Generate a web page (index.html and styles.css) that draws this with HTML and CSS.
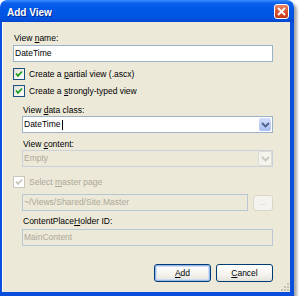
FILE: index.html
```html
<!DOCTYPE html>
<html lang="en">
<head>
    <meta charset="UTF-8">
    <title>Add View</title>
    <link rel="stylesheet" href="styles.css">
</head>
<body>

    <!-- Ventana del dialogo -->
    <div class="window">
        <div class="titlebar">
            <span class="title">Add View</span>
            <span class="close-btn">
                <svg width="9" height="9" viewBox="0 0 9 9">
                    <path d="M1 1 L8 8 M8 1 L1 8" stroke="#fff" stroke-width="2" fill="none"/>
                </svg>
            </span>
        </div>

        <div class="frame">
            <div class="body">
                <div class="label">View <u>n</u>ame:</div>
                <div class="textbox tb-name">DateTime</div>

                <div class="check check-1">
                    <span class="box">
                        <svg width="10" height="10" viewBox="0 0 10 10"><path d="M2 4.5 L4 6.8 L8 2.5" stroke="#21a121" stroke-width="1.8" fill="none"/></svg>
                    </span>
                    <span>Create a <u>p</u>artial view (.ascx)</span>
                </div>
                <div class="check check-2">
                    <span class="box">
                        <svg width="10" height="10" viewBox="0 0 10 10"><path d="M2 4.5 L4 6.8 L8 2.5" stroke="#21a121" stroke-width="1.8" fill="none"/></svg>
                    </span>
                    <span>Create a <u>s</u>trongly-typed view</span>
                </div>

                <div class="group">
                    <div class="label lbl-class">View <u>d</u>ata class:</div>
                    <div class="combo">
                        <span class="combo-text">DateTime<span class="caret"></span></span>
                        <span class="drop-btn">
                            <svg width="9" height="6" viewBox="0 0 9 6"><path d="M1 1 L4.5 4.5 L8 1" stroke="#4d6185" stroke-width="1.8" fill="none"/></svg>
                        </span>
                    </div>

                    <div class="label lbl-content">View <u>c</u>ontent:</div>
                    <div class="combo disabled">
                        <span class="combo-text">Empty</span>
                        <span class="drop-btn">
                            <svg width="9" height="6" viewBox="0 0 9 6"><path d="M1 1 L4.5 4.5 L8 1" stroke="#c9c7ba" stroke-width="1.8" fill="none"/></svg>
                        </span>
                    </div>
                </div>

                <div class="check check-3 disabled">
                    <span class="box">
                        <svg width="10" height="10" viewBox="0 0 10 10"><path d="M2 4.5 L4 6.8 L8 2.5" stroke="#c9c7ba" stroke-width="1.8" fill="none"/></svg>
                    </span>
                    <span>Select <u>m</u>aster page</span>
                </div>

                <div class="group">
                    <div class="master-row">
                        <div class="textbox disabled tb-master">~/Views/Shared/Site.Master</div>
                        <span class="browse-btn">...</span>
                    </div>
                    <div class="label lbl-cph">ContentPlace<u>H</u>older ID:</div>
                    <div class="textbox disabled tb-cph">MainContent</div>
                </div>

                <div class="actions">
                    <button class="btn btn-default"><u>A</u>dd</button>
                    <button class="btn"><u>C</u>ancel</button>
                </div>

                <!-- Agarre para redimensionar -->
                <svg class="grip" width="9" height="9" viewBox="0 0 9 9">
                    <g fill="#c5c2b2">
                        <rect x="7" y="1" width="2" height="2"/>
                        <rect x="4" y="4" width="2" height="2"/>
                        <rect x="7" y="4" width="2" height="2"/>
                        <rect x="1" y="7" width="2" height="2"/>
                        <rect x="4" y="7" width="2" height="2"/>
                        <rect x="7" y="7" width="2" height="2"/>
                    </g>
                </svg>
            </div>
        </div>
    </div>

</body>
</html>
```

FILE: styles.css
```css
body {
    margin: 0;
    padding: 0;
    background-color: #fff;
    font-family: "Liberation Sans", Arial, sans-serif;
    font-size: 8.5px;
    color: #000;
}

.window {
    width: 294px;
    height: 296px;
    display: flex;
    flex-direction: column;
    border-radius: 7px 7px 0 0;
    box-shadow: 3px 3px 3px rgba(0, 0, 0, 0.35);
    overflow: hidden;
}

.titlebar {
    height: 22px;
    flex-shrink: 0;
    display: flex;
    justify-content: space-between;
    align-items: center;
    background: linear-gradient(to bottom, #3d8dfc 0%, #0b61ec 14%, #0056e6 45%, #0053e2 80%, #0046cf 100%);
}

.title {
    color: #fff;
    font-weight: bold;
    font-size: 10px;
    padding-left: 7px;
    padding-top: 3px;
    text-shadow: 1px 1px 0 #0a2c8f;
}

.close-btn {
    width: 15px;
    height: 15px;
    box-sizing: border-box;
    margin-right: 5px;
    margin-top: 1px;
    border: 1px solid #fff;
    border-radius: 3px;
    background: linear-gradient(to bottom, #e98566 0%, #d9532e 50%, #c33a16 100%);
    display: flex;
    align-items: center;
    justify-content: center;
}

.frame {
    flex: 1;
    display: flex;
    border-left: 3px solid #0a4ede;
    border-right: 4px solid #0a4ede;
    border-bottom: 4px solid #0a4ede;
    box-shadow: inset 1px 0 0 #0028b0, inset -1px -1px 0 #0028b0;
}

.body {
    flex: 1;
    position: relative;
    background-color: #ece9d8;
    padding: 11px 17px 0 10px;
    border-left: 1px solid #fff;
    margin-left: -1px;
}

.label {
    height: 10px;
    line-height: 10px;
    padding-left: 1px;
}

.textbox {
    height: 17px;
    box-sizing: border-box;
    border: 1px solid #9cb2c9;
    background-color: #fff;
    line-height: 15px;
    padding-left: 1px;
    white-space: nowrap;
}

.textbox.disabled {
    background-color: #ece9d8;
    border-color: #b9c7d5;
    color: #aca899;
}

.tb-name {
    margin-top: 2px;
}

.check {
    height: 12px;
    line-height: 12px;
    display: flex;
    align-items: center;
    gap: 4px;
    margin-top: 5px;
}

.check .box {
    width: 12px;
    height: 12px;
    box-sizing: border-box;
    border: 1px solid #1c5180;
    background: linear-gradient(135deg, #dcdbd5 0%, #f6f5f1 60%, #fff 100%);
    display: flex;
    align-items: center;
    justify-content: center;
}

.check.disabled {
    color: #aca899;
}

.check.disabled .box {
    border-color: #cac8bb;
    background: #fff;
}

.check-1 {
    margin-top: 6px;
}

.check-3 {
    margin-top: 9px;
}

.group {
    margin-left: 9px;
}

.lbl-class {
    margin-top: 8px;
}

.lbl-content {
    margin-top: 6px;
}

.combo {
    height: 17px;
    box-sizing: border-box;
    margin-top: 1px;
    border: 1px solid #9cb2c9;
    background-color: #fff;
    display: flex;
    justify-content: space-between;
    align-items: stretch;
}

.combo-text {
    line-height: 15px;
    padding-left: 1px;
    display: flex;
    align-items: center;
}

.caret {
    width: 1px;
    height: 10px;
    background-color: #000;
    margin-left: 1px;
}

.drop-btn {
    width: 12px;
    margin: 1px;
    border-radius: 2px;
    background: linear-gradient(to bottom, #d2defc 0%, #b9cbf6 60%, #a8bdf2 100%);
    display: flex;
    align-items: center;
    justify-content: center;
}

.combo.disabled {
    background-color: #ece9d8;
    border-color: #c9d2da;
}

.combo.disabled .combo-text {
    color: #aca899;
}

.combo.disabled .drop-btn {
    background: #f4f3ee;
    border: 1px solid #dedcd2;
    margin: 0;
}

.master-row {
    display: flex;
    justify-content: space-between;
    align-items: flex-start;
    margin-top: 6px;
}

.tb-master {
    width: 226px;
}

.browse-btn {
    width: 20px;
    height: 16px;
    box-sizing: border-box;
    margin-top: 1px;
    border: 1px solid #d9d6ca;
    border-radius: 3px;
    background-color: #f4f3ee;
    color: #c9c7ba;
    font-size: 7px;
    line-height: 13px;
    text-align: center;
}

.lbl-cph {
    margin-top: 5px;
}

.tb-cph {
    margin-top: 3px;
}

.actions {
    display: flex;
    justify-content: flex-end;
    gap: 5px;
    margin-top: 18px;
}

.btn {
    width: 57px;
    height: 18px;
    padding: 0;
    border: 1px solid #003c74;
    border-radius: 3px;
    background: linear-gradient(to bottom, #fff 0%, #f4f3ee 60%, #e3e2da 100%);
    font-family: "Liberation Sans", Arial, sans-serif;
    font-size: 8.5px;
    color: #000;
}

.btn-default {
    box-shadow: inset 0 0 0 1px #98b8ea, inset 0 0 0 2px #cedcf5;
}

.grip {
    position: absolute;
    right: 1px;
    bottom: 1px;
}
```
